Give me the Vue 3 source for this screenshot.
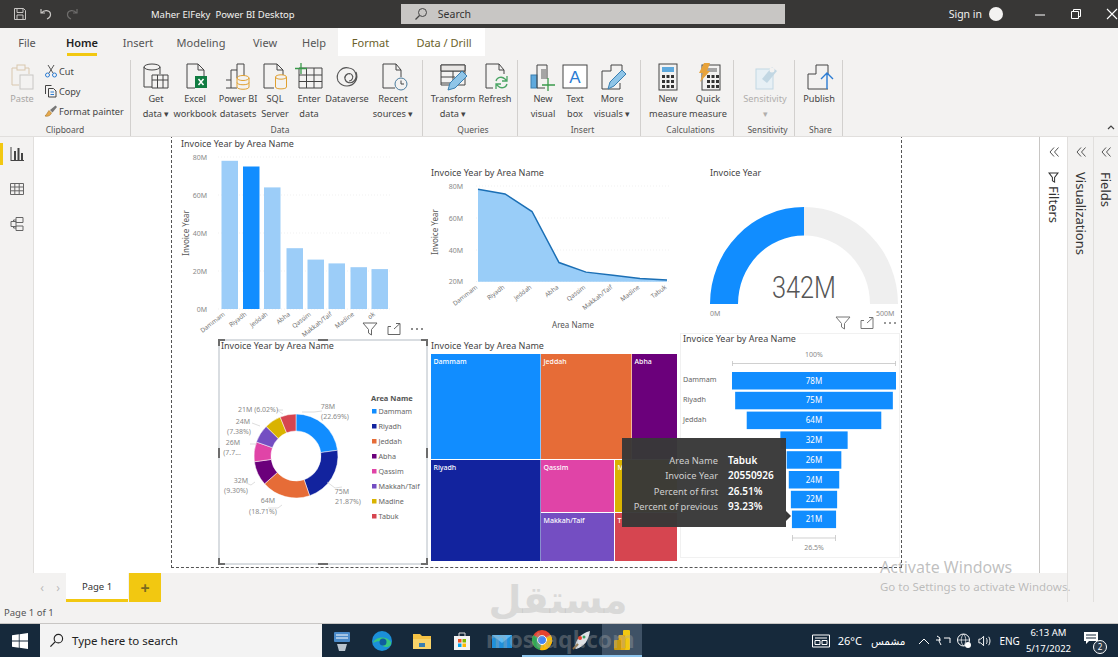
<template>
  <div class="app">
    <header class="titlebar">
      <div class="quick">
        <svg viewBox="0 0 14 14" width="14" height="14"><path d="M1.500 1.500h9l2 2v9h-11zM4 1.500v4h6v-4M4 12.500V8h6v4.500" fill="none" stroke="#c8c6c4"/></svg>
        <svg viewBox="0 0 14 14" width="14" height="14"><path d="M2 2v4h4M2.500 6C5 2.500 11 3 11.500 7c.3 2.500-1.500 4-3.500 5" fill="none" stroke="#c8c6c4" stroke-width="1.200"/></svg>
        <svg viewBox="0 0 14 14" width="14" height="14"><path d="M12 2v4H8M11.500 6C9 2.500 3 3 2.500 7c-.3 2.500 1.500 4 3.500 5" fill="none" stroke="#6e6d6c" stroke-width="1.200"/></svg>
      </div>
      <div class="doc-title">Maher ElFeky&nbsp; Power BI Desktop</div>
      <div class="search">
        <svg viewBox="0 0 14 14" width="14" height="14"><circle cx="8.500" cy="5.500" r="4" fill="none" stroke="#444"/><path d="M5.500 8.500L1.500 12.500" stroke="#444" stroke-width="1.200"/></svg>
        <span>Search</span>
      </div>
      <div class="sign">Sign in</div>
      <div class="avatar"></div>
      <div class="winbtns">
        <svg viewBox="0 0 12 12" width="12" height="12"><path d="M1 7h10" stroke="#fff"/></svg>
        <svg viewBox="0 0 12 12" width="12" height="12"><path d="M1.500 3.500h7v7h-7zM3.500 3.500v-2h7v7h-2" fill="none" stroke="#fff"/></svg>
        <svg viewBox="0 0 12 12" width="12" height="12"><path d="M1 1l10 10M11 1L1 11" stroke="#fff" stroke-width="1.100"/></svg>
      </div>
    </header>

    <nav class="tabs">
      <div v-for="t in tabs" :key="t.name" class="tab" :class="{ active: t.name === 'Home', context: t.context }" :style="{ width: t.w + 'px', marginRight: (t.mr || 0) + 'px' }">{{ t.name }}</div>
    </nav>

    <section class="ribbon">
      <div class="group clipboard">
        <div class="group-body">
          <div class="paste">
            <svg viewBox="0 0 26 30" width="26" height="30"><path d="M3 5h5M16 5h4v6M3 5v17h7" fill="none" stroke="#d9c7ae"/><rect x="8" y="2" width="8" height="5" fill="none" stroke="#d9c7ae"/><rect x="11" y="12" width="13" height="14" fill="none" stroke="#c8c6c4"/></svg>
            <span>Paste</span>
          </div>
          <div class="small-list">
            <div class="small-item">
              <svg viewBox="0 0 14 14" width="14" height="14"><path d="M4 1l5 8M10 1L5 9" stroke="#555" fill="none"/><circle cx="3.500" cy="11" r="2" fill="none" stroke="#2b7cd3"/><circle cx="10.500" cy="11" r="2" fill="none" stroke="#2b7cd3"/></svg>
              <span>Cut</span>
            </div>
            <div class="small-item">
              <svg viewBox="0 0 14 14" width="14" height="14"><path d="M1.500 10V1.500h6M4.500 4.500h5l2.500 2.500v6H4.500z" fill="none" stroke="#444"/><path d="M6.500 8h3.500M6.500 10.500h3.500" stroke="#2b7cd3"/></svg>
              <span>Copy</span>
            </div>
            <div class="small-item">
              <svg viewBox="0 0 14 14" width="14" height="14"><path d="M1 12c3 1 6-1 6.500-3L5 6.500C3.500 8.500 3 10 1 12z" fill="#e6a94c" stroke="#a5742a" stroke-width=".6"/><path d="M6 6l2.500 2.500L13 3l-1.500-1.500z" fill="#777"/></svg>
              <span>Format painter</span>
            </div>
          </div>
        </div>
        <div class="group-label">Clipboard</div>
      </div>

      <div v-for="g in groups" :key="g.name" class="group" :style="{ width: g.w + 'px', paddingLeft: g.pad + 'px' }">
        <div class="group-body">
          <div v-for="b in g.items" :key="b.icon" class="big" :class="{ muted: b.muted }" :style="{ width: b.w + 'px' }">
            <svg viewBox="0 0 30 30" width="30" height="30" v-html="icons[b.icon]"></svg>
            <span v-for="line in b.lines" :key="line">{{ line }}</span>
          </div>
        </div>
        <div class="group-label">{{ g.name }}</div>
      </div>

      <div class="collapse">
        <svg viewBox="0 0 8 5" width="8" height="5"><path d="M1 4l3-3 3 3" fill="none" stroke="#444" stroke-width="1.200"/></svg>
      </div>
    </section>

    <main class="main">
      <aside class="rail">
        <div class="rail-item current">
          <svg viewBox="0 0 16 16" width="16" height="16"><path d="M2 1v14M2 14.500h13" stroke="#444" fill="none"/><path d="M5 5h2v9H5zM8.500 2h2v12h-2zM12 7h2v7h-2z" fill="#444"/></svg>
        </div>
        <div class="rail-item">
          <svg viewBox="0 0 16 16" width="16" height="16"><path d="M1.500 2.500h13v11h-13zM1.500 6h13M1.500 9.800h13M5.800 2.500v11M10.200 2.500v11" fill="none" stroke="#666"/></svg>
        </div>
        <div class="rail-item">
          <svg viewBox="0 0 16 16" width="16" height="16"><path d="M7 1.500h7v5H7zM2 5.500h5v5H2zM7 10h7v4.500H7zM7 4H4.500v1.500M4.500 10.500V12H7" fill="none" stroke="#666"/></svg>
        </div>
      </aside>

      <div class="stage">
        <div class="canvas">
          <div class="page-outline"></div>

          <!-- column chart -->
          <svg class="visual v-bar" viewBox="176 137 225 200">
            <text class="title" x="181" y="147">Invoice Year by Area Name</text>
            <g v-for="t in barTicks" :key="t.label">
              <line class="grid" x1="218" :x2="390" :y1="t.y" :y2="t.y" />
              <text class="tick" x="207" :y="t.y + 2.500" text-anchor="end">{{ t.label }}</text>
            </g>
            <text class="axis" transform="rotate(-90 189 233)" x="189" y="233" text-anchor="middle">Invoice Year</text>
            <rect v-for="b in bars" :key="b.name" :x="b.x" :y="b.y" width="16.500" :height="309 - b.y" :fill="b.fill" />
            <text v-for="b in bars" :key="b.name + 'l'" class="cat" :transform="`rotate(-38 ${b.x + 4} 315)`" :x="b.x + 4" y="315" text-anchor="end">{{ b.label }}</text>
          </svg>
          <div class="visual-header head-bar">
            <svg viewBox="0 0 16 14" width="16" height="14"><path d="M1 1h14L9.500 7.500V13l-3-2V7.500z" fill="none" stroke="#666"/></svg>
            <svg viewBox="0 0 14 14" width="14" height="14"><path d="M9 1.500h4v11H1v-8h3M7 7l6-5.500" fill="none" stroke="#666"/></svg>
            <svg viewBox="0 0 14 4" width="14" height="4"><circle cx="2" cy="2" r="1" fill="#666"/><circle cx="7" cy="2" r="1" fill="#666"/><circle cx="12" cy="2" r="1" fill="#666"/></svg>
          </div>

          <!-- area chart -->
          <svg class="visual v-area" viewBox="426 160 250 175">
            <text class="title" x="431" y="176">Invoice Year by Area Name</text>
            <g v-for="t in areaTicks" :key="t.label">
              <line class="grid" x1="476" x2="670" :y1="t.y" :y2="t.y" />
              <text class="tick" x="463" :y="t.y + 2.500" text-anchor="end">{{ t.label }}</text>
            </g>
            <text class="axis" transform="rotate(-90 438 232)" x="438" y="232" text-anchor="middle">Invoice Year</text>
            <polygon :points="areaFill" fill="#99cdf8" />
            <polyline :points="areaLine" fill="none" stroke="#1b6fb5" stroke-width="1.500" />
            <text v-for="p in areaPts" :key="p.name" class="cat" :transform="`rotate(-38 ${p.x} 288)`" :x="p.x" y="288" text-anchor="end">{{ p.name }}</text>
            <text class="axis" x="573" y="328" text-anchor="middle">Area Name</text>
          </svg>

          <!-- gauge -->
          <svg class="visual v-gauge" viewBox="700 160 200 175">
            <text class="title" x="710" y="176">Invoice Year</text>
            <path d="M710 304A94 97 0 0 1 804 207V235.500A66 68.500 0 0 0 738 304Z" fill="#118dff" />
            <path d="M804 207A94 97 0 0 1 898 304H870A66 68.500 0 0 0 804 235.500Z" fill="#efefef" />
            <text class="gauge-value" x="804" y="298" text-anchor="middle" textLength="64" lengthAdjust="spacingAndGlyphs">342M</text>
            <text class="tick" x="710" y="316">0M</text>
            <text class="tick" x="876" y="316">500M</text>
          </svg>
          <div class="visual-header head-gauge">
            <svg viewBox="0 0 16 14" width="16" height="14"><path d="M1 1h14L9.500 7.500V13l-3-2V7.500z" fill="none" stroke="#777"/></svg>
            <svg viewBox="0 0 14 14" width="14" height="14"><path d="M9 1.500h4v11H1v-8h3M7 7l6-5.500" fill="none" stroke="#777"/></svg>
            <svg viewBox="0 0 14 4" width="14" height="4"><circle cx="2" cy="2" r="1" fill="#777"/><circle cx="7" cy="2" r="1" fill="#777"/><circle cx="12" cy="2" r="1" fill="#777"/></svg>
          </div>

          <!-- donut, selected -->
          <svg class="visual v-donut" viewBox="215 336 216 232">
            <rect x="219" y="340" width="208" height="224" fill="#fff" stroke="#b4bcc4" />
            <path v-for="h in handles" :key="h" :d="h" fill="none" stroke="#6d6d6d" stroke-width="2" />
            <text class="title" x="221" y="349">Invoice Year by Area Name</text>
            <path v-for="s in donut" :key="s.name" :d="s.d" :fill="s.color" stroke="#fff" stroke-width=".5" />
            <path class="leader" d="M322 411l-8 1h-12M342 487l-7 1-8-6M268 508h10l4-3M246 483l5 2 4-3M250 444h7M252 423l8 3M283 410h-6l6 4" />
            <text v-for="l in donutLabels" :key="l.t + l.y" class="tick" :x="l.x" :y="l.y" text-anchor="middle">{{ l.t }}</text>
            <text class="legend-title" x="371" y="401">Area Name</text>
            <g v-for="(a, i) in areas" :key="a.name">
              <rect :x="372" :y="409 + i * 15" width="4.500" height="4.500" :fill="a.color" />
              <text class="legend" x="378.500" :y="414 + i * 15">{{ a.name }}</text>
            </g>
          </svg>

          <!-- treemap -->
          <svg class="visual v-tree" viewBox="428 338 252 226">
            <text class="title" x="431" y="349">Invoice Year by Area Name</text>
            <g v-for="c in tree" :key="c.name">
              <rect :x="c.x" :y="c.y" :width="c.w" :height="c.h" :fill="c.color" />
              <text class="tree-label" :x="c.x + 2.500" :y="c.y + 9.500">{{ c.label || c.name }}</text>
            </g>
          </svg>

          <!-- funnel -->
          <svg class="visual v-funnel" viewBox="680 333 220 225">
            <rect x="680.500" y="333.500" width="219" height="224" fill="#fff" stroke="#f1f1f1" />
            <text class="title" x="683" y="342">Invoice Year by Area Name</text>
            <text class="tick" x="814" y="357" text-anchor="middle">100%</text>
            <path class="bracket" d="M732.500 361v5M732.500 363.500h163M895.500 361v5M792.500 535v6M792.500 538h43M835.500 535v6" />
            <g v-for="(f, i) in funnel" :key="f.name">
              <rect :x="f.x" :y="f.y" :width="f.w" height="17.500" fill="#118dff" />
              <text class="funnel-value" x="814" :y="f.y + 11.500" text-anchor="middle">{{ f.value }}M</text>
              <!-- rows below the third sit behind the tooltip -->
              <text v-if="i < 3" class="legend" x="683" :y="f.y + 10">{{ f.name }}</text>
            </g>
            <text class="tick" x="814" y="550" text-anchor="middle">26.5%</text>
          </svg>

          <div class="tooltip">
            <template v-for="r in tipRows" :key="r[0]">
              <span class="tip-key">{{ r[0] }}</span>
              <span class="tip-val">{{ r[1] }}</span>
            </template>
          </div>
        </div>

        <div class="pagebar">
          <span class="pager">&#8249;</span>
          <span class="pager">&#8250;</span>
          <div class="page-tab">Page 1</div>
          <div class="page-add">+</div>
        </div>
      </div>

      <aside class="panes">
        <div v-for="p in panes" :key="p.name" class="pane" :class="p.cls">
          <svg viewBox="0 0 12 12" width="12" height="12"><path d="M6 1.500L2 6l4 4.500M10.500 1.500L6.500 6l4 4.500" fill="none" stroke="#555"/></svg>
          <svg v-if="p.name === 'Filters'" class="pane-funnel" viewBox="0 0 12 12" width="11" height="11"><path d="M1 1h10L7.200 6v5L4.800 9.500V6z" fill="none" stroke="#333" stroke-width="1.100"/></svg>
          <span class="pane-name">{{ p.name }}</span>
        </div>
      </aside>
    </main>

    <div class="status">Page 1 of 1</div>

    <footer class="taskbar">
      <div class="start">
        <svg viewBox="0 0 16 16" width="16" height="16"><path d="M0 2.300l6.800-1V7.600H0zM7.600 1.200L16 0v7.600H7.600zM0 8.400h6.800v6.400L0 13.800zM7.600 8.400H16V16l-8.400-1.200z" fill="#fff"/></svg>
      </div>
      <div class="task-search">
        <svg viewBox="0 0 16 16" width="15" height="15"><circle cx="10" cy="6" r="4.500" fill="none" stroke="#222" stroke-width="1.200"/><path d="M6.500 9.500L1.500 14.500" stroke="#222" stroke-width="1.400"/></svg>
        <span>Type here to search</span>
      </div>
      <div v-for="t in taskIcons" :key="t.id" class="task-icon" :class="{ running: t.running, focused: t.focused }">
        <svg viewBox="0 0 24 24" width="24" height="24" v-html="t.svg"></svg>
      </div>
      <div class="tray">
        <svg viewBox="0 0 20 16" width="20" height="16"><path d="M1.500 2h17v12h-17zM4 5h12M4 7.500h5v4H4zM11 7.500h5v4h-5z" fill="none" stroke="#fff"/></svg>
        <span class="temp">26°C</span>
        <span class="weather">مشمس</span>
        <svg class="tray-up" viewBox="0 0 12 8" width="12" height="8"><path d="M1 7l5-5 5 5" fill="none" stroke="#fff"/></svg>
        <svg viewBox="0 0 16 14" width="16" height="14"><path d="M2 2l3 2-1 3 2 4M1 6h5M9 4h6v5" fill="none" stroke="#fff"/></svg>
        <svg viewBox="0 0 16 16" width="16" height="16"><circle cx="7.500" cy="7" r="6" fill="none" stroke="#fff"/><path d="M1.500 7h12M7.500 1c-3 3-3 9 0 12M7.500 1c3 3 3 9 0 12" fill="none" stroke="#fff" stroke-width=".7"/><circle cx="12" cy="12" r="3" fill="#fff"/></svg>
        <svg viewBox="0 0 16 14" width="15" height="14"><path d="M2 5h2l3-3v10L4 9H2zM10 4c1 1.500 1 4.500 0 6M12.500 2.500c1.800 2.500 1.800 6.500 0 9" fill="none" stroke="#fff"/></svg>
        <span class="lang">ENG</span>
        <div class="clock"><span>6:13 AM</span><span>5/17/2022</span></div>
        <div class="notify">
          <svg viewBox="0 0 16 14" width="16" height="14"><path d="M1 1h14v9H6l-3 3v-3H1z" fill="#fff"/><path d="M3 4h10M3 7h10" stroke="#16293b"/></svg>
          <span class="badge">2</span>
        </div>
      </div>
    </footer>

    <div class="activate">
      <div class="act-big">Activate Windows</div>
      <div class="act-small">Go to Settings to activate Windows.</div>
    </div>
    <div class="mostaql">
      <div class="mostaql-ar">مستقل</div>
      <div class="mostaql-en">mostaql.com</div>
    </div>
  </div>
</template>

<script setup>
const tabs = [
  { name: 'File', w: 54 },
  { name: 'Home', w: 56 },
  { name: 'Insert', w: 56 },
  { name: 'Modeling', w: 70 },
  { name: 'View', w: 58, mr: 10 },
  { name: 'Help', w: 20, mr: 14 },
  { name: 'Format', w: 65, context: true },
  { name: 'Data / Drill', w: 82, context: true }
]

const icons = {
  getdata: '<ellipse cx="11" cy="5" rx="8" ry="3" fill="none" stroke="#444"/><path d="M3 5v20h8M19 5v7" fill="none" stroke="#444"/><path d="M11 13h16v13H11zM11 18h16M16.500 13v13M22 13v13" fill="none" stroke="#444"/>',
  excel: '<path d="M7 2h11l6 6v6M7 2v24h8M18 2v6h6" fill="none" stroke="#444"/><rect x="15" y="14" width="12" height="12" fill="#107c41"/><path d="M18.500 17l5 6M23.500 17l-5 6" stroke="#fff" stroke-width="1.500"/>',
  pbi: '<path d="M14 16V2h7v12M14 8H8v18H3M8 18H3M14 26H8" fill="none" stroke="#444"/><ellipse cx="20" cy="16" rx="6" ry="2.500" fill="none" stroke="#e0a030"/><path d="M14 16v9c0 3 12 3 12 0v-9M14 20.500c0 3 12 3 12 0" fill="none" stroke="#e0a030"/>',
  sql: '<path d="M4 2h13l6 6v5M4 2v24h10M17 2v6h6" fill="none" stroke="#444"/><ellipse cx="21" cy="15" rx="5.500" ry="2.200" fill="none" stroke="#e0a030"/><path d="M15.500 15v10c0 2.500 11 2.500 11 0V15" fill="none" stroke="#e0a030"/>',
  enter: '<path d="M5 6h23v20H5zM5 13h23M5 19.500h23M12.500 6v20M20 6v20" fill="none" stroke="#444"/><path d="M7 1v11M1 6.500h12" stroke="#3a9a4b" stroke-width="1.300"/>',
  dataverse: '<path d="M6 19c-3-8 4-15 11-13 7 1 9 9 5 13-3 3-8 2-9-2-1-3 2-6 5-5M24 10c3 7-2 14-9 14-4 0-7-2-9-5M13 16c0-4 5-6 7-3 2 2 0 6-3 6" fill="none" stroke="#555" stroke-width="1.100"/>',
  recent: '<path d="M5 2h13l5 6v7M5 2v24h12M18 2v6h5" fill="none" stroke="#444"/><circle cx="23" cy="22" r="6" fill="#f3f2f1" stroke="#4a7c9e"/><path d="M23 18.500V22h3" fill="none" stroke="#444"/>',
  transform: '<path d="M3 3h24v20H3zM3 9h24M3 15h14M3 21h10M15 9v14" fill="none" stroke="#444"/><path d="M3 3h24v6H3z" fill="#e8e6e4" stroke="#444"/><path d="M10 28l2-7L24 9l5 5-12 12z" fill="#8fc5e8" stroke="#3a7fb0"/>',
  refresh: '<path d="M6 2h13l5 6v4M6 2v24h7M19 2v6h5" fill="none" stroke="#444"/><path d="M16 19c1-4 6-5 9-2l2 2M27 14v5h-5M27 22c-1 4-6 5-9 2l-2-2M16 27v-5h5" fill="none" stroke="#4aa564" stroke-width="1.300"/>',
  newvisual: '<rect x="3" y="13" width="6" height="13" fill="#5ea9dd" stroke="#3a7fb0"/><path d="M9 26V3h10v14M9 26h8" fill="none" stroke="#444"/><rect x="13" y="7" width="5" height="10" fill="#a5a5a5"/><path d="M20 16v13M14 23h13" stroke="#3a9a4b" stroke-width="1.300"/>',
  textbox: '<rect x="3" y="3" width="24" height="23" fill="#fff" stroke="#444"/><text x="15" y="21" font-size="17" font-family="Liberation Sans, sans-serif" fill="#2b7cd3" text-anchor="middle">A</text>',
  more: '<path d="M14 3h11v12M14 3v6H5v18h18v-6" fill="none" stroke="#444"/><path d="M11 27l2-7L25 8l4 4-12 12z" fill="#8fc5e8" stroke="#3a7fb0"/>',
  calc: '<rect x="6" y="2" width="18" height="26" fill="none" stroke="#444"/><rect x="9" y="5" width="12" height="5" fill="#5ea9dd"/><path d="M9 13h3v3H9zM13.500 13h3v3h-3zM18 13h3v3h-3zM9 18h3v3H9zM13.500 18h3v3h-3zM18 18h3v3h-3zM9 23h3v3H9zM13.500 23h3v3h-3zM18 23h3v3h-3z" fill="#333"/>',
  quick: '<rect x="9" y="3" width="18" height="25" fill="none" stroke="#444"/><rect x="14" y="6" width="10" height="4" fill="#a5a5a5"/><path d="M14 13h3v3h-3zM18.500 13h3v3h-3zM23 13h3v3h-3zM14 18h3v3h-3zM18.500 18h3v3h-3zM23 18h3v3h-3zM14 23h3v3h-3zM18.500 23h3v3h-3zM23 23h3v3h-3z" fill="#333"/><path d="M11 1h6l-3 8h3L7 20l3-9H6z" fill="#e8a33a"/>',
  sensitivity: '<rect x="6" y="7" width="17" height="20" fill="#e7f0f5" stroke="#c2d7e3"/><path d="M12 17l10-12 5 4-10 12z" fill="#c2d7e3"/><circle cx="22" cy="8" r="2.500" fill="#f3f2f1"/>',
  publish: '<path d="M12 3h12v10M12 3v9H4v15h20" fill="none" stroke="#444"/><path d="M23 27V11M17 17l6-6 6 6" fill="none" stroke="#2b7cd3" stroke-width="1.400"/>'
}

const groups = [
  {
    name: 'Data', w: 292, pad: 7,
    items: [
      { icon: 'getdata', w: 36, lines: ['Get', 'data ▾'] },
      { icon: 'excel', w: 42, lines: ['Excel', 'workbook'] },
      { icon: 'pbi', w: 44, lines: ['Power BI', 'datasets'] },
      { icon: 'sql', w: 30, lines: ['SQL', 'Server'] },
      { icon: 'enter', w: 38, lines: ['Enter', 'data'] },
      { icon: 'dataverse', w: 38, lines: ['Dataverse'] },
      { icon: 'recent', w: 54, lines: ['Recent', 'sources ▾'] }
    ]
  },
  {
    name: 'Queries', w: 95, pad: 6,
    items: [
      { icon: 'transform', w: 48, lines: ['Transform', 'data ▾'] },
      { icon: 'refresh', w: 36, lines: ['Refresh'] }
    ]
  },
  {
    name: 'Insert', w: 123, pad: 7,
    items: [
      { icon: 'newvisual', w: 36, lines: ['New', 'visual'] },
      { icon: 'textbox', w: 28, lines: ['Text', 'box'] },
      { icon: 'more', w: 46, lines: ['More', 'visuals ▾'] }
    ]
  },
  {
    name: 'Calculations', w: 93, pad: 7,
    items: [
      { icon: 'calc', w: 40, lines: ['New', 'measure'] },
      { icon: 'quick', w: 40, lines: ['Quick', 'measure'] }
    ]
  },
  {
    name: 'Sensitivity', w: 61, pad: 7,
    items: [{ icon: 'sensitivity', w: 48, muted: true, lines: ['Sensitivity', '▾'] }]
  },
  {
    name: 'Share', w: 48, pad: 4,
    items: [{ icon: 'publish', w: 40, lines: ['Publish'] }]
  }
]

const areas = [
  { name: 'Dammam', value: 78, color: '#118dff' },
  { name: 'Riyadh', value: 75, color: '#12239e' },
  { name: 'Jeddah', value: 64, color: '#e66c37' },
  { name: 'Abha', value: 32, color: '#6b007b' },
  { name: 'Qassim', value: 26, color: '#e044a7' },
  { name: 'Makkah/Taif', value: 24, color: '#744ec2' },
  { name: 'Madine', value: 22, color: '#d9b300' },
  { name: 'Tabuk', value: 21, color: '#d64550' }
]

// column chart
const barXs = [221.5, 243, 264, 286.5, 307.5, 328.5, 350.5, 371.5]
const bars = areas.map((a, i) => ({
  name: a.name,
  label: i === 7 ? 'ok' : a.name,
  x: barXs[i],
  y: 309 - a.value * 1.9,
  fill: i === 1 ? '#118dff' : '#9ccdf8'
}))
const barTicks = [
  { label: '80M', y: 157 },
  { label: '60M', y: 195 },
  { label: '40M', y: 233 },
  { label: '20M', y: 271 },
  { label: '0M', y: 309 }
]

// area chart
const areaPts = areas.map((a, i) => ({
  name: a.name,
  x: 478 + i * 27,
  y: 186 + (80 - a.value) * 1.595
}))
const areaLine = areaPts.map(p => `${p.x},${p.y}`).join(' ')
const areaFill = `478,281.7 ${areaLine} 667,281.7`
const areaTicks = [
  { label: '80M', y: 186 },
  { label: '60M', y: 218 },
  { label: '40M', y: 250 },
  { label: '20M', y: 281.5 }
]

// donut
const arcPoint = (r, angle) => {
  const cx = 296
  const cy = 456
  return `${(cx + r * Math.cos(angle)).toFixed(2)} ${(cy + r * Math.sin(angle)).toFixed(2)}`
}
let start = -Math.PI / 2
const donut = areas.map(a => {
  const end = start + (a.value / 342) * Math.PI * 2
  const large = end - start > Math.PI ? 1 : 0
  const d = `M${arcPoint(42, start)}A42 42 0 ${large} 1 ${arcPoint(42, end)}L${arcPoint(25, end)}A25 25 0 ${large} 0 ${arcPoint(25, start)}Z`
  start = end
  return { name: a.name, color: a.color, d }
})
const donutLabels = [
  { t: '78M', x: 328, y: 409 },
  { t: '(22.69%)', x: 335, y: 419 },
  { t: '75M', x: 342, y: 494 },
  { t: '21.87%)', x: 348, y: 504 },
  { t: '64M', x: 268, y: 503 },
  { t: '(18.71%)', x: 263, y: 514 },
  { t: '32M', x: 241, y: 483 },
  { t: '(9.30%)', x: 236, y: 493 },
  { t: '26M', x: 233, y: 445 },
  { t: '(7.7...', x: 232, y: 455 },
  { t: '24M', x: 243, y: 424 },
  { t: '(7.38%)', x: 239, y: 434 },
  { t: '21M (6.02%)', x: 258, y: 412 }
]
const handles = [
  'M219 346v-6h6', 'M421 340h6v6', 'M219 558v6h6', 'M421 564h6v-6',
  'M219 448v10', 'M427 448v10', 'M318 340h10', 'M318 564h10'
]

// treemap, the two small tiles are mostly behind the tooltip
const tree = [
  { name: 'Dammam', x: 431, y: 354, w: 109.5, h: 105, color: '#118dff' },
  { name: 'Jeddah', x: 541, y: 354, w: 90.5, h: 105, color: '#e66c37' },
  { name: 'Abha', x: 632, y: 354, w: 45, h: 105, color: '#6b007b' },
  { name: 'Riyadh', x: 431, y: 460, w: 109.5, h: 101, color: '#12239e' },
  { name: 'Qassim', x: 541, y: 460, w: 73, h: 52, color: '#e044a7' },
  { name: 'Makkah/Taif', x: 541, y: 513, w: 73, h: 48, color: '#744ec2' },
  { name: 'Madine', label: 'M', x: 615, y: 460, w: 62, h: 52, color: '#d9b300' },
  { name: 'Tabuk', label: 'T', x: 615, y: 513, w: 62, h: 48, color: '#d64550' }
]

// funnel
const funnel = areas.map((a, i) => {
  const w = (164 * a.value) / 78
  return { name: a.name, value: a.value, w, x: 814 - w / 2, y: 372 + i * 19.8 }
})

const tipRows = [
  ['Area Name', 'Tabuk'],
  ['Invoice Year', '20550926'],
  ['Percent of first', '26.51%'],
  ['Percent of previous', '93.23%']
]

const panes = [
  { name: 'Filters', cls: 'filters' },
  { name: 'Visualizations', cls: 'viz' },
  { name: 'Fields', cls: 'fields' }
]

const taskIcons = [
  { id: 'net', svg: '<rect x="4" y="3" width="16" height="10" rx="1" fill="#4a8ac9"/><path d="M6 6h12M6 9h12" stroke="#fff"/><path d="M7 15h10l-2 7H9z" fill="#b9c4cf"/>' },
  { id: 'edge', svg: '<circle cx="12" cy="12" r="10" fill="#1b8fd8"/><path d="M3 14c2-6 13-8 18-1 1 3-2 5-5 5-2 0-4-1-4-3 0-3-4-4-9-1z" fill="#37c77f"/><circle cx="13" cy="13" r="3.500" fill="#0f5d9e"/>' },
  { id: 'files', svg: '<path d="M3 5h7l2 2h9v13H3z" fill="#f6c244"/><rect x="3" y="10" width="18" height="10" fill="#f9d469"/><rect x="9" y="14" width="6" height="4" fill="#3a7fb0"/>' },
  { id: 'store', svg: '<path d="M4 7h16v14H4z" fill="#f3f3f3"/><path d="M9 7V4h6v3" fill="none" stroke="#ddd"/><path d="M8 10h3.500v3.500H8z" fill="#f25022"/><path d="M12.500 10H16v3.500h-3.500z" fill="#7fba00"/><path d="M8 14.500h3.500V18H8z" fill="#00a4ef"/><path d="M12.500 14.500H16V18h-3.500z" fill="#ffb900"/>' },
  { id: 'mail', svg: '<path d="M2 6h20v13H2z" fill="#1f8fdc"/><path d="M2 6l10 8 10-8" fill="#5cb9f2"/>' },
  { id: 'chrome', running: true, svg: '<circle cx="12" cy="12" r="10" fill="#e5432f"/><path d="M12 12L3.300 7A10 10 0 0 0 10 22z" fill="#34a853"/><path d="M12 12l8.700-5a10 10 0 0 1-10.700 15z" fill="#fbbc05"/><circle cx="12" cy="12" r="4.500" fill="#4285f4" stroke="#fff"/>' },
  { id: 'paint', running: true, svg: '<path d="M5 20c0-8 6-15 15-17-1 9-6 16-14 18z" fill="#dfe3e6"/><circle cx="10" cy="10" r="2" fill="#e5432f"/><circle cx="14" cy="9" r="1.500" fill="#37a163"/><path d="M3 21l5-5" stroke="#8a6a3a" stroke-width="2"/>' },
  { id: 'pbi', running: true, focused: true, svg: '<rect x="13" y="2" width="7" height="20" rx="1" fill="#f2c811"/><rect x="8.500" y="7" width="7" height="15" rx="1" fill="#e6ad10"/><rect x="4" y="12" width="7" height="10" rx="1" fill="#c99a0d"/>' }
]
</script>

<style>
body { margin: 0; background: #fff; }
</style>

<style scoped>
.app {
  position: relative;
  width: 1118px;
  height: 660px;
  overflow: hidden;
  display: flex;
  flex-direction: column;
  background: #fff;
  font-family: "Noto Sans", "Open Sans", sans-serif;
  color: #444;
}

/* title bar */
.titlebar {
  height: 28px;
  flex: none;
  display: flex;
  align-items: center;
  background: #383736;
  color: #f3f2f1;
  font-size: 10.5px;
}
.quick { display: flex; gap: 12px; width: 151px; padding-left: 13px; box-sizing: border-box; }
.doc-title { width: 250px; font-size: 9.5px; }
.search {
  width: 384px;
  height: 20px;
  display: flex;
  align-items: center;
  gap: 10px;
  padding-left: 13px;
  box-sizing: border-box;
  background: #c8c6c4;
  color: #333;
}
.sign { margin-left: 164px; }
.avatar { width: 14px; height: 14px; border-radius: 50%; background: #f3f2f1; margin-left: 7px; }
.winbtns { display: flex; gap: 24px; margin-left: 31px; }

/* tabs */
.tabs { height: 28px; flex: none; display: flex; background: #f3f2f1; font-size: 11px; }
.tab { display: flex; align-items: center; justify-content: center; position: relative; white-space: nowrap; color: #555; }
.tab.active { color: #222; font-weight: 600; }
.tab.active::after {
  content: "";
  position: absolute;
  left: 13px;
  right: 13px;
  bottom: 0;
  height: 3px;
  background: #f2c811;
}
.tab.context { background: #fff; color: #6b5f2a; }

/* ribbon */
.ribbon {
  height: 81px;
  flex: none;
  display: flex;
  background: #f3f2f1;
  border-bottom: 1px solid #e1dfdd;
  box-sizing: border-box;
  font-size: 9.2px;
  color: #444;
}
.group {
  display: flex;
  flex-direction: column;
  box-sizing: border-box;
  border-right: 1px solid #d2d0ce;
  margin: 4px 0 0;
}
.clipboard { width: 131px; }
.group-body { display: flex; flex: 1; }
.group-label { height: 12px; line-height: 12px; text-align: center; font-size: 8.5px; color: #555; }
.big { display: flex; flex-direction: column; align-items: center; line-height: 15px; white-space: nowrap; }
.big svg { margin: 2px 0 -1px; display: block; flex: none; }
.big.muted { color: #b0aeac; }
.paste { width: 44px; display: flex; flex-direction: column; align-items: center; color: #a8a6a4; line-height: 15px; padding-top: 3px; }
.paste svg { margin-bottom: -2px; }
.small-list { display: flex; flex-direction: column; gap: 4px; padding-top: 3px; }
.small-item { display: flex; align-items: center; gap: 1px; height: 16px; white-space: nowrap; }
.collapse { margin-left: auto; align-self: flex-end; padding: 0 3px 3px 0; }

/* main area */
.main { flex: 1; min-height: 0; display: flex; background: #f3f2f1; }
.rail { width: 34px; flex: none; display: flex; flex-direction: column; align-items: center; padding-top: 6px; box-sizing: border-box; gap: 13px; }
.rail-item { width: 34px; height: 22px; display: flex; align-items: center; justify-content: center; box-sizing: border-box; }
.rail-item.current { border-left: 3px solid #f2c811; padding-right: 3px; }
.stage { flex: 1; min-width: 0; display: flex; flex-direction: column; }
.canvas { position: relative; flex: 1; background: #fff; overflow: hidden; border-left: 1px solid #e1dfdd; box-sizing: border-box; margin-left: -1px; }

/* visuals sit on the free report canvas */
.page-outline { position: absolute; left: 137px; top: -2px; width: 729px; height: 431px; border: 1px dashed #555; }
.visual { position: absolute; display: block; overflow: visible; }
.v-bar { left: 142px; top: 0; width: 225px; height: 200px; }
.v-area { left: 392px; top: 23px; width: 250px; height: 175px; }
.v-gauge { left: 666px; top: 23px; width: 200px; height: 175px; }
.v-donut { left: 181px; top: 199px; width: 216px; height: 232px; }
.v-tree { left: 394px; top: 201px; width: 252px; height: 226px; }
.v-funnel { left: 646px; top: 196px; width: 220px; height: 225px; }
.visual text { font-family: "Noto Sans", "Open Sans", sans-serif; }
.title { font-size: 9px; fill: #444; }
.tick { font-size: 7px; fill: #8a8a8a; }
.axis { font-size: 8px; fill: #555; }
.cat { font-size: 6.3px; fill: #777; }
.grid { stroke: #f1f1f1; stroke-dasharray: 1 2; }
.gauge-value { font-size: 32px; font-weight: 300; fill: #555; font-family: Roboto, sans-serif !important; }
.leader { fill: none; stroke: #c8c8c8; stroke-width: .6; }
.legend-title { font-size: 7.5px; font-weight: 700; fill: #555; }
.legend { font-size: 7.2px; fill: #666; }
.tree-label { font-size: 7px; font-weight: 500; fill: #fff; }
.funnel-value { font-size: 8px; fill: #fff; }
.bracket { fill: none; stroke: #bbb; stroke-width: .7; }
.visual-header { position: absolute; display: flex; align-items: center; gap: 9px; height: 14px; }
.head-bar { left: 328px; top: 185px; }
.head-gauge { left: 801px; top: 179px; }

.tooltip {
  position: absolute;
  left: 588px;
  top: 301px;
  width: 164px;
  height: 89px;
  box-sizing: border-box;
  padding: 15px 0 0;
  background: rgba(56, 56, 56, .97);
  display: grid;
  grid-template-columns: 96px 1fr;
  grid-auto-rows: 15.3px;
  column-gap: 10px;
  font-size: 9.3px;
  line-height: 15px;
  color: #d0d0d0;
}
.tooltip::after {
  content: "";
  position: absolute;
  right: -5px;
  bottom: 6px;
  border-left: 5px solid #383838;
  border-top: 5px solid transparent;
  border-bottom: 5px solid transparent;
}
.tip-key { text-align: right; white-space: nowrap; }
.tip-val { color: #fff; font-weight: 600; font-size: 10px; }

/* page tabs */
.pagebar { height: 29px; flex: none; display: flex; align-items: stretch; background: #f3f2f1; font-size: 9.5px; }
.pager { width: 16px; display: flex; align-items: center; justify-content: center; color: #bbb; font-size: 12px; }
.page-tab { width: 62px; display: flex; align-items: center; justify-content: center; background: #fff; border-bottom: 3px solid #f2c811; box-sizing: border-box; color: #333; }
.page-add { width: 32px; display: flex; align-items: center; justify-content: center; background: #f2c811; color: #7a6a20; font-size: 16px; font-weight: 700; margin-left: 1px; }

/* side panes */
.panes { width: 79px; flex: none; display: flex; }
.pane { display: flex; flex-direction: column; align-items: center; padding-top: 9px; box-sizing: border-box; border-left: 1px solid #c8c6c4; height: 465px; }
.filters { width: 28px; background: #fff; height: 436px; }
.viz { width: 26px; background: #f3f2f1; border-left-color: #e1dfdd; }
.fields { width: 25px; background: #f3f2f1; border-left-color: #e1dfdd; }
.pane-name { writing-mode: vertical-rl; font-size: 13px; color: #333; margin-top: 14px; }
.pane-funnel { margin-top: 14px; }
.pane-funnel + .pane-name { margin-top: 3px; }

/* status and taskbar */
.status { height: 21px; flex: none; display: flex; align-items: center; padding-left: 4px; font-size: 9.5px; color: #555; background: #f3f2f1; border-bottom: 1px solid #c8c6c4; }
.taskbar { height: 33px; flex: none; display: flex; align-items: stretch; background: #16293b; color: #fff; font-size: 11px; margin-bottom: 3px; }
.start { width: 40px; display: flex; align-items: center; justify-content: center; }
.task-search { width: 282px; display: flex; align-items: center; gap: 8px; padding-left: 9px; box-sizing: border-box; background: #f3f3f3; color: #222; font-size: 11.5px; }
.task-icon { width: 40px; display: flex; align-items: center; justify-content: center; box-sizing: border-box; }
.task-icon.running { border-bottom: 2px solid #8cc4ec; }
.task-icon.focused { background: #3f5266; }
.tray { margin-left: auto; display: flex; align-items: center; gap: 5px; padding-right: 15px; }
.temp { margin-left: 2px; }
.weather { font-family: "DejaVu Sans", sans-serif; font-size: 10.5px; margin-left: 4px; }
.tray-up { margin-left: 8px; }
.lang { font-size: 10px; margin-left: 2px; }
.clock { display: flex; flex-direction: column; align-items: center; line-height: 16px; margin-left: 1px; font-size: 9.5px; }
.notify { position: relative; margin-left: 7px; width: 20px; height: 20px; }
.badge {
  position: absolute;
  right: -4px;
  bottom: -3px;
  width: 12px;
  height: 12px;
  border-radius: 50%;
  background: #2a3a4a;
  border: 1px solid #fff;
  font-size: 8px;
  line-height: 12px;
  text-align: center;
}

/* overlays on top of everything */
.activate { position: absolute; left: 880px; top: 556px; color: rgba(150, 150, 150, .6); pointer-events: none; }
.act-big { font-size: 16px; line-height: 22px; }
.act-small { font-size: 11.5px; line-height: 17px; white-space: nowrap; }
.mostaql { position: absolute; left: 486px; top: 574px; width: 144px; text-align: center; color: rgba(170, 170, 170, .35); pointer-events: none; }
.mostaql-ar { font-family: "DejaVu Sans", sans-serif; font-weight: 700; font-size: 38px; line-height: 52px; }
.mostaql-en { font-size: 23px; font-weight: 700; line-height: 26px; }
</style>
